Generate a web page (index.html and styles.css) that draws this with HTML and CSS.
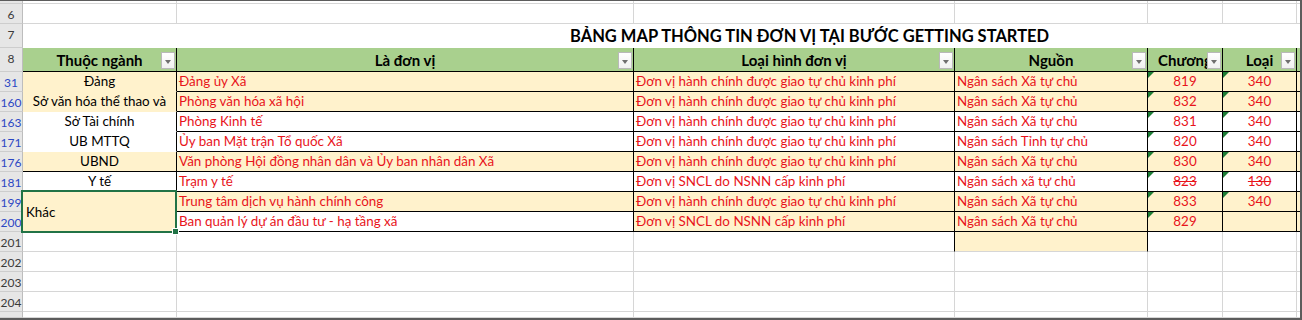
FILE: index.html
```html
<!DOCTYPE html>
<html lang="vi">
<head>
<meta charset="utf-8">
<title>Bảng map thông tin đơn vị</title>
<link rel="stylesheet" href="styles.css">
</head>
<body>
<div class="sheet">
  <!-- row 5 (partial) -->
  <div class="rh"></div><div class="c"></div><div class="c"></div><div class="c"></div><div class="c"></div><div class="c"></div><div class="c"></div><div class="c g"></div>
  <!-- row 6 -->
  <div class="rh">6</div><div class="c"></div><div class="c"></div><div class="c"></div><div class="c"></div><div class="c"></div><div class="c"></div><div class="c g"></div>
  <!-- row 7 -->
  <div class="rh">7</div><div class="title">BẢNG MAP THÔNG TIN ĐƠN VỊ TẠI BƯỚC GETTING STARTED</div>
  <!-- row 8 header -->
  <div class="rh">8</div>
  <div class="hd">Thuộc ngành<span class="dd"></span></div>
  <div class="hd">Là đơn vị<span class="dd"></span></div>
  <div class="hd">Loại hình đơn vị<span class="dd"></span></div>
  <div class="hd">Nguồn<span class="dd"></span></div>
  <div class="hd">Chương<span class="dd"></span></div>
  <div class="hd">Loại<span class="dd"></span></div>
  <div class="hd g"></div>

  <!-- 31 -->
  <div class="rh blue">31</div>
  <div class="c t y ctr nb">Đảng</div>
  <div class="c t y red lft">Đảng ủy Xã</div>
  <div class="c t y red lft">Đơn vị hành chính được giao tự chủ kinh phí</div>
  <div class="c t y red lft">Ngân sách Xã tự chủ</div>
  <div class="c t y red ctr tri">819</div>
  <div class="c t y red ctr tri">340</div>
  <div class="c t y g"></div>
  <!-- 160 -->
  <div class="rh blue">160</div>
  <div class="c t y ctr nb">Sở văn hóa thể thao và</div>
  <div class="c t y red lft">Phòng văn hóa xã hội</div>
  <div class="c t y red lft">Đơn vị hành chính được giao tự chủ kinh phí</div>
  <div class="c t y red lft">Ngân sách Xã tự chủ</div>
  <div class="c t y red ctr tri">832</div>
  <div class="c t y red ctr tri">340</div>
  <div class="c t y g"></div>
  <!-- 163 -->
  <div class="rh blue">163</div>
  <div class="c t w ctr nb">Sở Tài chính</div>
  <div class="c t w red lft">Phòng Kinh tế</div>
  <div class="c t w red lft">Đơn vị hành chính được giao tự chủ kinh phí</div>
  <div class="c t w red lft">Ngân sách Xã tự chủ</div>
  <div class="c t w red ctr tri">831</div>
  <div class="c t w red ctr tri">340</div>
  <div class="c t w g"></div>
  <!-- 171 -->
  <div class="rh blue">171</div>
  <div class="c t w ctr nb">UB MTTQ</div>
  <div class="c t w red lft">Ủy ban Mặt trận Tổ quốc Xã</div>
  <div class="c t w red lft">Đơn vị hành chính được giao tự chủ kinh phí</div>
  <div class="c t w red lft">Ngân sách Tỉnh tự chủ</div>
  <div class="c t w red ctr tri">820</div>
  <div class="c t w red ctr tri">340</div>
  <div class="c t w g"></div>
  <!-- 176 -->
  <div class="rh blue">176</div>
  <div class="c t y ctr">UBND</div>
  <div class="c t y red lft">Văn phòng Hội đồng nhân dân và Ủy ban nhân dân Xã</div>
  <div class="c t y red lft">Đơn vị hành chính được giao tự chủ kinh phí</div>
  <div class="c t y red lft">Ngân sách Xã tự chủ</div>
  <div class="c t y red ctr tri">830</div>
  <div class="c t y red ctr tri">340</div>
  <div class="c t y g"></div>
  <!-- 181 -->
  <div class="rh blue">181</div>
  <div class="c t w ctr">Y tế</div>
  <div class="c t w red lft">Trạm y tế</div>
  <div class="c t w red lft">Đơn vị SNCL do NSNN cấp kinh phí</div>
  <div class="c t w red lft">Ngân sách xã tự chủ</div>
  <div class="c t w red ctr tri"><s>823</s></div>
  <div class="c t w red ctr tri"><s>130</s></div>
  <div class="c t w g"></div>
  <!-- 199 -->
  <div class="rh blue">199</div>
  <div class="c t y merged">Khác<span class="sel"></span></div>
  <div class="c t y red lft">Trung tâm dịch vụ hành chính công</div>
  <div class="c t y red lft">Đơn vị hành chính được giao tự chủ kinh phí</div>
  <div class="c t y red lft">Ngân sách Xã tự chủ</div>
  <div class="c t y red ctr tri">833</div>
  <div class="c t y red ctr tri">340</div>
  <div class="c t y g"></div>
  <!-- 200 -->
  <div class="rh blue">200</div>
  <div class="c t w red lft">Ban quản lý dự án đầu tư - hạ tầng xã</div>
  <div class="c t y red lft">Đơn vị SNCL do NSNN cấp kinh phí</div>
  <div class="c t y red lft">Ngân sách Xã tự chủ</div>
  <div class="c t y red ctr tri">829</div>
  <div class="c t y red ctr"></div>
  <div class="c t y g"></div>
  <!-- 201 -->
  <div class="rh">201</div><div class="c"></div><div class="c"></div><div class="c"></div><div class="c y boxed"></div><div class="c"></div><div class="c"></div><div class="c g"></div>
  <!-- 202 -->
  <div class="rh">202</div><div class="c"></div><div class="c"></div><div class="c"></div><div class="c"></div><div class="c"></div><div class="c"></div><div class="c g"></div>
  <!-- 203 -->
  <div class="rh">203</div><div class="c"></div><div class="c"></div><div class="c"></div><div class="c"></div><div class="c"></div><div class="c"></div><div class="c g"></div>
  <!-- 204 -->
  <div class="rh">204</div><div class="c"></div><div class="c"></div><div class="c"></div><div class="c"></div><div class="c"></div><div class="c"></div><div class="c g"></div>
  <!-- 205 (partial) -->
  <div class="rh"></div><div class="c"></div><div class="c"></div><div class="c"></div><div class="c"></div><div class="c"></div><div class="c"></div><div class="c g"></div>
</div>
</body>
</html>
```
FILE: styles.css
```css
html, body {
  margin: 0;
  padding: 0;
  background: #ffffff;
}

.sheet {
  width: 1300px;
  height: 317px;
  border-top: 1px solid #5c5c5c;
  border-right: 2px solid #5c5c5c;
  border-bottom: 2px solid #5c5c5c;
  display: grid;
  grid-template-columns: 23px 154px 457px 321px 193px 75px 74px 3px;
  grid-template-rows: 3px 20px 24px 24px repeat(8, 20px) repeat(4, 20px) 6px;
  font-family: Lato, "Noto Sans", sans-serif;
  font-size: 13.4px;
  color: #000;
  background: #fff;
}

.rh,
.c,
.hd,
.title {
  box-sizing: border-box;
  white-space: nowrap;
  overflow: hidden;
}

/* row headers */
.rh {
  background: #e6e6e6;
  border-right: 1px solid #bdbdbd;
  border-bottom: 1px solid #cdcdcd;
  color: #3a3a3a;
  font-size: 12px;
  line-height: 19px;
  padding-top: 1px;
  text-align: center;
}
.rh.blue {
  color: #2b47c4;
}

/* generic cell with gridlines */
.c {
  border-right: 1px solid #d6d6d6;
  border-bottom: 1px solid #d6d6d6;
  line-height: 19px;
  position: relative;
}
.c.g {
  border-right: none;
}

/* table cell: black borders */
.c.t {
  border-right-color: #000;
  border-bottom-color: #000;
}
.c.t.g {
  border-right: none;
}
.c.nb {
  border-bottom-color: transparent;
}

.y { background: #fff2cc; }
.w { background: #ffffff; }

.red { color: #e8141b; }
.ctr { text-align: center; }
.lft { padding-left: 2px; }

.tri::before {
  content: "";
  position: absolute;
  top: 0;
  left: 0;
  border-top: 6px solid #1c7d35;
  border-right: 6px solid transparent;
}

/* title row */
.title {
  grid-column: span 7;
  font-weight: 700;
  font-size: 16.5px;
  line-height: 23px;
  padding-top: 1px;
  padding-left: 547px;
  color: #000;
}

/* header row */
.hd {
  position: relative;
  background: #a9d08e;
  border-right: 1px solid #000;
  border-bottom: 1px solid #000;
  font-weight: 700;
  font-size: 15px;
  line-height: 22px;
  padding-top: 1px;
  text-align: center;
}
.hd.g {
  border-right: none;
}
.dd {
  position: absolute;
  right: 1px;
  bottom: 2px;
  width: 14px;
  height: 17px;
  box-sizing: border-box;
  border: 1px solid #b9b9b9;
  background: linear-gradient(#ffffff, #f1f1f1);
}
.dd::after {
  content: "";
  position: absolute;
  left: 3px;
  top: 7px;
  border-top: 4px solid #6f6f6f;
  border-left: 3.5px solid transparent;
  border-right: 3.5px solid transparent;
}

/* merged selected cell */
.merged {
  grid-row: span 2;
  display: flex;
  align-items: center;
  padding-left: 3px;
  padding-top: 1px;
  overflow: visible;
}
.sel {
  position: absolute;
  top: -2px;
  left: -2px;
  right: -1px;
  bottom: -2px;
  border: 2px solid #217346;
  z-index: 2;
}
.sel::after {
  content: "";
  position: absolute;
  right: -4px;
  bottom: -4px;
  width: 5px;
  height: 5px;
  background: #217346;
  border: 1px solid #ffffff;
}

.boxed {
  border-right-color: #000;
  border-left: 1px solid #000;
  margin-left: -1px;
}
```
